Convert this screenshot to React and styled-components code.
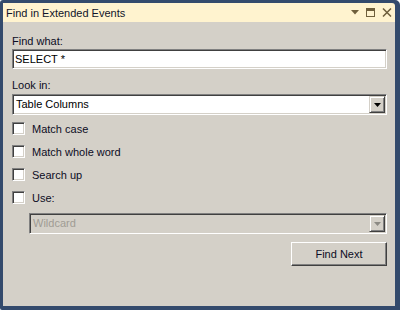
import React from "react";
import styled, { createGlobalStyle } from "styled-components";

const GlobalStyle = createGlobalStyle`
  html, body { margin: 0; padding: 0; background: #ffffff; }
  body { font-family: "Liberation Sans", Arial, sans-serif; font-size: 11px; }
`;

const Frame = styled.div`
  box-sizing: border-box;
  width: 400px;
  height: 310px;
  background: #334a6c;
  padding: 3px 5px 4px 3px;
  display: flex;
  flex-direction: column;
  border-radius: 3px 5px 0 2px;
`;

const TitleBar = styled.div`
  height: 19px;
  flex: none;
  background: #fff3cf;
  display: flex;
  align-items: center;
  padding: 0 3px 0 3px;
  border-top-right-radius: 3px;
`;

const Title = styled.div`
  flex: 1;
  font-size: 11px;
  line-height: 13px;
  color: #10142a;
  padding-top: 1px;
`;

const TitleButtons = styled.div`
  display: flex;
  align-items: center;
  gap: 7px;
  color: #6f5f3c;
  svg { display: block; }
`;

const Body = styled.div`
  flex: 1;
  background: #d4d0c8;
  padding: 13px 8px 0 9px;
  display: flex;
  flex-direction: column;
`;

const Label = styled.div`
  font-size: 11px;
  line-height: 13px;
  height: 13px;
  color: #0c0c24;
  margin-top: ${(p) => p.$top || 0}px;
  margin-bottom: ${(p) => p.$bottom || 0}px;
`;

const sunken = `
  border: 1px solid;
  border-color: #808080 #ffffff #ffffff #808080;
  box-shadow: inset 1px 1px 0 #404040, inset -1px -1px 0 #d4d0c8;
`;

const TextBox = styled.div`
  box-sizing: border-box;
  height: 20px;
  ${sunken}
  background: #ffffff;
  padding: 1px 2px 1px 2px;
  font-size: 11px;
  line-height: 16px;
  color: #000;
`;

const Combo = styled.div`
  box-sizing: border-box;
  height: 21px;
  ${sunken}
  background: ${(p) => (p.$disabled ? "#d4d0c8" : "#ffffff")};
  padding: 1px;
  display: flex;
  margin-left: ${(p) => p.$indent || 0}px;
  margin-top: ${(p) => p.$top || 0}px;
`;

const ComboText = styled.div`
  flex: 1;
  padding-left: 2px;
  font-size: 11px;
  line-height: 17px;
  color: ${(p) => (p.$disabled ? "#a09c94" : "#000")};
`;

const ComboButton = styled.div`
  box-sizing: border-box;
  width: 16px;
  height: 17px;
  background: #d4d0c8;
  border: 1px solid;
  border-color: #d4d0c8 #404040 #404040 #d4d0c8;
  box-shadow: inset 1px 1px 0 #ffffff, inset -1px -1px 0 #808080;
  display: flex;
  align-items: center;
  justify-content: center;
  color: ${(p) => (p.$disabled ? "#8c8a84" : "#000")};
  svg { display: block; }
`;

const Options = styled.div`
  margin-top: 2px;
  display: flex;
  flex-direction: column;
`;

const CheckRow = styled.div`
  height: 23px;
  display: flex;
  align-items: center;
  gap: 7px;
`;

const CheckBox = styled.div`
  box-sizing: border-box;
  width: 13px;
  height: 13px;
  ${sunken}
  background: #ffffff;
`;

const CheckLabel = styled.span`
  font-size: 11px;
  line-height: 13px;
  color: #0c0c24;
  padding-top: 1px;
`;

const Actions = styled.div`
  display: flex;
  justify-content: flex-end;
  margin-top: 8px;
`;

const Button = styled.div`
  box-sizing: border-box;
  width: 96px;
  height: 24px;
  background: #d4d0c8;
  border: 1px solid;
  border-color: #ffffff #404040 #404040 #ffffff;
  box-shadow: inset -1px -1px 0 #808080;
  display: flex;
  align-items: center;
  justify-content: center;
  font-size: 11px;
  color: #0c0c24;
`;

const DropArrow = ({ color = "currentColor" }) => (
  <svg width="7" height="4" viewBox="0 0 7 4">
    <path d="M0 0H7L3.5 4Z" fill={color} />
  </svg>
);

const checks = ["Match case", "Match whole word", "Search up", "Use:"];

export default function App() {
  return (
    <>
      <GlobalStyle />
      <Frame>
        <TitleBar>
          <Title>Find in Extended Events</Title>
          <TitleButtons>
            <svg width="8" height="5" viewBox="0 0 8 5">
              <path d="M0 0H8L4 4.5Z" fill="currentColor" />
            </svg>
            <svg width="9" height="9" viewBox="0 0 9 9">
              <rect x="0.5" y="0.5" width="8" height="8" fill="none" stroke="currentColor" />
              <rect x="0" y="0" width="9" height="3" fill="currentColor" />
            </svg>
            <svg width="10" height="9" viewBox="0 0 10 9">
              <path d="M1 0.5L9 8.5M9 0.5L1 8.5" stroke="currentColor" strokeWidth="1.5" />
            </svg>
          </TitleButtons>
        </TitleBar>
        <Body>
          <Label $bottom={1}>Find what:</Label>
          <TextBox>SELECT *</TextBox>
          <Label $top={10} $bottom={2}>Look in:</Label>
          <Combo>
            <ComboText>Table Columns</ComboText>
            <ComboButton>
              <DropArrow />
            </ComboButton>
          </Combo>
          <Options>
            {checks.map((c) => (
              <CheckRow key={c}>
                <CheckBox />
                <CheckLabel>{c}</CheckLabel>
              </CheckRow>
            ))}
          </Options>
          <Combo $disabled $indent={17} $top={4}>
            <ComboText $disabled>Wildcard</ComboText>
            <ComboButton $disabled>
              <DropArrow />
            </ComboButton>
          </Combo>
          <Actions>
            <Button>Find Next</Button>
          </Actions>
        </Body>
      </Frame>
    </>
  );
}
